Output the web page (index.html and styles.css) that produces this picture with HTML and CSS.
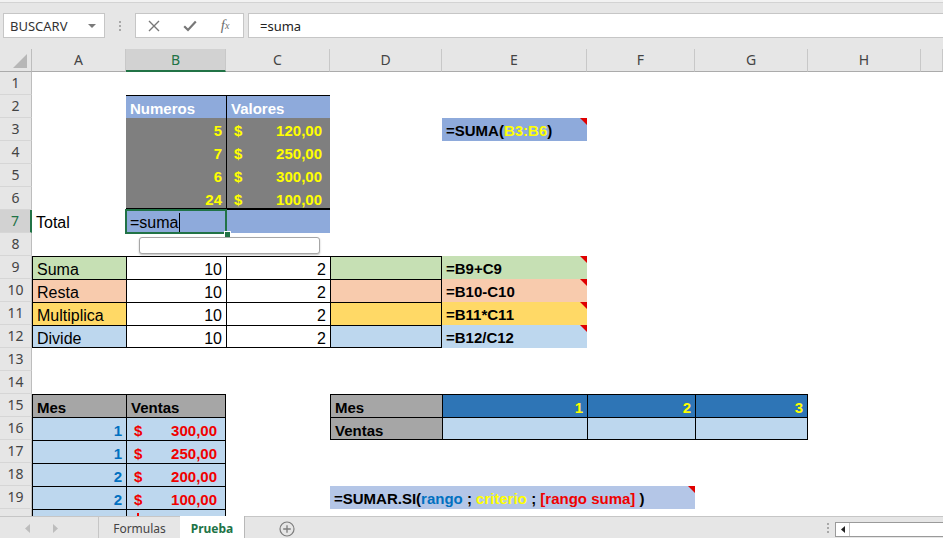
FILE: index.html
```html
<!DOCTYPE html>
<html lang="es">
<head>
<meta charset="utf-8">
<title>Prueba - Excel</title>
<link rel="stylesheet" href="styles.css">
</head>
<body>
<div class="app">
  <div class="fbar">
    <div class="namebox"><span>BUSCARV</span><svg class="caretdn" width="8" height="4" viewBox="0 0 8 4"><path d="M0 0H8L4 4Z" fill="#7a7a7a"/></svg></div>
    <div class="grip"><i></i><i></i><i></i></div>
    <div class="btns">
      <span class="btn"><svg width="12" height="12" viewBox="0 0 12 12"><path d="M1 1L11 11M11 1L1 11" stroke="#777" stroke-width="1.4" fill="none"/></svg></span>
      <span class="btn"><svg width="14" height="12" viewBox="0 0 14 12"><path d="M1.2 6.2L5 10L12.8 1.6" stroke="#777" stroke-width="2.2" fill="none"/></svg></span>
      <span class="btn fx">f<sub>x</sub></span>
    </div>
    <div class="finput">=suma</div>
  </div>

  <div class="sheet">
    <div class="grid">
      <div class="corner"><i></i></div>
      <div class="ch">A</div><div class="ch csel">B</div><div class="ch">C</div><div class="ch">D</div><div class="ch">E</div><div class="ch">F</div><div class="ch">G</div><div class="ch">H</div><div class="ch"></div>

      <div class="rh">1</div><div class="c"></div><div class="c"></div><div class="c"></div><div class="c"></div><div class="c"></div><div class="c"></div><div class="c"></div><div class="c"></div><div class="c"></div>

      <div class="rh">2</div><div class="c"></div><div class="c b f-blue wh t">Numeros</div><div class="c b f-blue wh t l">Valores</div><div class="c"></div><div class="c"></div><div class="c"></div><div class="c"></div><div class="c"></div><div class="c"></div>

      <div class="rh">3</div><div class="c"></div><div class="c b f-gray ye r">5</div><div class="c b f-gray ye l acc"><span>$</span><span>120,00</span></div><div class="c"></div><div class="c b f-blue tri">=SUMA(<span class="ye">B3:B6</span>)</div><div class="c"></div><div class="c"></div><div class="c"></div><div class="c"></div>

      <div class="rh">4</div><div class="c"></div><div class="c b f-gray ye r">7</div><div class="c b f-gray ye l acc"><span>$</span><span>250,00</span></div><div class="c"></div><div class="c"></div><div class="c"></div><div class="c"></div><div class="c"></div><div class="c"></div>

      <div class="rh">5</div><div class="c"></div><div class="c b f-gray ye r">6</div><div class="c b f-gray ye l acc"><span>$</span><span>300,00</span></div><div class="c"></div><div class="c"></div><div class="c"></div><div class="c"></div><div class="c"></div><div class="c"></div>

      <div class="rh">6</div><div class="c"></div><div class="c b f-gray ye r bm2">24</div><div class="c b f-gray ye l acc bm2"><span>$</span><span>100,00</span></div><div class="c"></div><div class="c"></div><div class="c"></div><div class="c"></div><div class="c"></div><div class="c"></div>

      <div class="rh rsel">7</div><div class="c">Total</div><div class="c f-blue">=suma<span class="cursor"></span></div><div class="c f-blue"></div><div class="c"></div><div class="c"></div><div class="c"></div><div class="c"></div><div class="c"></div><div class="c"></div>

      <div class="rh">8</div><div class="c"></div><div class="c"></div><div class="c"></div><div class="c"></div><div class="c"></div><div class="c"></div><div class="c"></div><div class="c"></div><div class="c"></div>

      <div class="rh">9</div><div class="c f-green t l">Suma</div><div class="c r t l">10</div><div class="c r t l">2</div><div class="c f-green t l rt"></div><div class="c b f-green tri">=B9+C9</div><div class="c"></div><div class="c"></div><div class="c"></div><div class="c"></div>

      <div class="rh">10</div><div class="c f-salmon t l">Resta</div><div class="c r t l">10</div><div class="c r t l">2</div><div class="c f-salmon t l rt"></div><div class="c b f-salmon tri">=B10-C10</div><div class="c"></div><div class="c"></div><div class="c"></div><div class="c"></div>

      <div class="rh">11</div><div class="c f-gold t l">Multiplica</div><div class="c r t l">10</div><div class="c r t l">2</div><div class="c f-gold t l rt"></div><div class="c b f-gold tri">=B11*C11</div><div class="c"></div><div class="c"></div><div class="c"></div><div class="c"></div>

      <div class="rh">12</div><div class="c f-lblue t l bm">Divide</div><div class="c r t l bm">10</div><div class="c r t l bm">2</div><div class="c f-lblue t l rt bm"></div><div class="c b f-lblue tri">=B12/C12</div><div class="c"></div><div class="c"></div><div class="c"></div><div class="c"></div>

      <div class="rh">13</div><div class="c"></div><div class="c"></div><div class="c"></div><div class="c"></div><div class="c"></div><div class="c"></div><div class="c"></div><div class="c"></div><div class="c"></div>

      <div class="rh">14</div><div class="c"></div><div class="c"></div><div class="c"></div><div class="c"></div><div class="c"></div><div class="c"></div><div class="c"></div><div class="c"></div><div class="c"></div>

      <div class="rh">15</div><div class="c b f-mid t l">Mes</div><div class="c b f-mid t l rt">Ventas</div><div class="c"></div><div class="c b f-mid t l">Mes</div><div class="c b f-dblue ye r t l">1</div><div class="c b f-dblue ye r t l">2</div><div class="c b f-dblue ye r t l rt">3</div><div class="c"></div><div class="c"></div>

      <div class="rh">16</div><div class="c b f-lblue bl r t l">1</div><div class="c b f-lblue rd acc t l rt"><span>$</span><span>300,00</span></div><div class="c"></div><div class="c b f-mid t l bm">Ventas</div><div class="c f-lblue t l bm"></div><div class="c f-lblue t l bm"></div><div class="c f-lblue t l rt bm"></div><div class="c"></div><div class="c"></div>

      <div class="rh">17</div><div class="c b f-lblue bl r t l">1</div><div class="c b f-lblue rd acc t l rt"><span>$</span><span>250,00</span></div><div class="c"></div><div class="c"></div><div class="c"></div><div class="c"></div><div class="c"></div><div class="c"></div><div class="c"></div>

      <div class="rh">18</div><div class="c b f-lblue bl r t l">2</div><div class="c b f-lblue rd acc t l rt"><span>$</span><span>200,00</span></div><div class="c"></div><div class="c"></div><div class="c"></div><div class="c"></div><div class="c"></div><div class="c"></div><div class="c"></div>

      <div class="rh">19</div><div class="c b f-lblue bl r t l">2</div><div class="c b f-lblue rd acc t l rt"><span>$</span><span>100,00</span></div><div class="c"></div><div class="c b f-peri tri span3">=SUMAR.SI(<span class="bl">rango</span> ; <span class="ye">criterio</span> ; <span class="rd">[rango suma]</span> )</div><div class="c"></div><div class="c"></div><div class="c"></div>

      <div class="rh"></div><div class="c f-lblue t l"></div><div class="c f-lblue t l rt"><span class="peek"></span></div><div class="c"></div><div class="c"></div><div class="c"></div><div class="c"></div><div class="c"></div><div class="c"></div><div class="c"></div>
    </div>

    <div class="sel"><span class="handle"></span></div>
    <div class="autocomplete"></div>
  </div>

  <div class="tabs">
    <div class="nav">
      <svg width="5" height="9" viewBox="0 0 5 9"><path d="M5 0V9L0 4.5Z" fill="#bdbdbd"/></svg>
      <svg width="5" height="9" viewBox="0 0 5 9"><path d="M0 0V9L5 4.5Z" fill="#bdbdbd"/></svg>
    </div>
    <div class="tab">Formulas</div>
    <div class="tab active">Prueba</div>
    <div class="addsheet"><svg width="16" height="16" viewBox="0 0 16 16"><circle cx="8" cy="8" r="7" fill="none" stroke="#7d7d7d" stroke-width="1.2"/><path d="M8 4.2V11.8M4.2 8H11.8" stroke="#7d7d7d" stroke-width="1.3"/></svg></div>
    <div class="spacer"></div>
    <div class="tgrip"><i></i><i></i><i></i></div>
    <div class="hscroll"><span class="sbtn"><svg width="4" height="7" viewBox="0 0 4 7"><path d="M4 0V7L0 3.5Z" fill="#222"/></svg></span></div>
  </div>
</div>
</body>
</html>
```

FILE: styles.css
```css
* { box-sizing: border-box; }
html, body { margin: 0; padding: 0; }
body {
  width: 943px;
  height: 538px;
  overflow: hidden;
  background: #fff;
  font-family: "Noto Sans", "Liberation Sans", sans-serif;
}
.app { display: flex; flex-direction: column; height: 538px; }

/* formula bar */
.fbar {
  height: 49px;
  flex: none;
  display: flex;
  align-items: flex-start;
  padding: 11px 0 0 3px;
  background: #e6e6e6;
  border-top: 2px solid #f2f2f2;
  box-shadow: inset 0 1px 0 #d3d3d3;
}
.namebox {
  width: 102px;
  height: 25px;
  background: #fff;
  border: 1px solid #c6c6c6;
  display: flex;
  align-items: center;
  justify-content: space-between;
  padding: 1px 8px 0 6px;
  font-size: 13px;
  color: #333;
}
.grip {
  width: 30px;
  height: 25px;
  display: flex;
  flex-direction: column;
  align-items: center;
  justify-content: center;
  gap: 2px;
}
.grip i, .tgrip i { display: block; width: 2px; height: 2px; background: #a8a8a8; }
.btns {
  width: 109px;
  height: 25px;
  background: #fff;
  border: 1px solid #c6c6c6;
  display: flex;
}
.btn {
  width: 36px;
  display: flex;
  align-items: center;
  justify-content: center;
}
.fx {
  font-family: "Liberation Serif", serif;
  font-style: italic;
  font-size: 15px;
  color: #6e6e6e;
  line-height: 1;
}
.fx sub { font-size: 10px; vertical-align: -1px; }
.finput {
  flex: 1;
  margin-left: 4px;
  margin-right: -2px;
  height: 25px;
  background: #fff;
  border: 1px solid #c6c6c6;
  padding: 1px 0 0 11px;
  font-size: 13px;
  line-height: 22px;
  color: #222;
}

/* sheet */
.sheet { flex: 1; position: relative; overflow: hidden; }
.grid {
  display: grid;
  grid-template-columns: 32px 94px 100px 104px 112px 145px 108px 113px 113px 22px;
  grid-auto-rows: 23px;
}
.corner {
  background: #e6e6e6;
  border-right: 1px solid #bdbdbd;
  border-bottom: 1px solid #ababab;
  position: relative;
}
.corner i {
  position: absolute;
  right: 4px;
  bottom: 3px;
  width: 0;
  height: 0;
  border-bottom: 14px solid #b7b7b7;
  border-left: 14px solid transparent;
}
.ch {
  background: #e6e6e6;
  border-right: 1px solid #c8c8c8;
  border-bottom: 1px solid #ababab;
  text-align: center;
  font-size: 14px;
  line-height: 22px;
  color: #444;
}
.csel {
  background: #d2d2d2;
  border-bottom: 2px solid #217346;
  color: #217346;
}
.rh {
  background: #e6e6e6;
  border-right: 1px solid #bdbdbd;
  border-bottom: 1px solid #d6d6d6;
  text-align: center;
  font-size: 14px;
  line-height: 22px;
  color: #444;
}
.rsel {
  background: #d2d2d2;
  border-right: 2px solid #217346;
  color: #217346;
}
.c {
  font-family: "Liberation Sans", Arial, sans-serif;
  font-size: 16px;
  line-height: 21px;
  padding: 2px 4px 0;
  white-space: nowrap;
  color: #000;
}
.b { font-weight: bold; font-size: 15px; }
.r { text-align: right; }
.acc { display: flex; justify-content: space-between; padding: 2px 8px 0 7px; }
.span3 { grid-column: span 3; }
.peek {
  display: block;
  width: 2px;
  height: 3px;
  margin: 1px 0 0 6px;
  background: #f00000;
}

/* borders */
.t { border-top: 1px solid #000; }
.l { border-left: 1px solid #000; }
.rt { border-right: 1px solid #000; }
.bm { border-bottom: 1px solid #000; }
.bm2 { border-bottom: 2px solid #000; }

/* fills */
.f-blue { background: #8eaadb; }
.f-gray { background: #7f7f7f; }
.f-green { background: #c6e0b4; }
.f-salmon { background: #f8cbad; }
.f-gold { background: #ffd966; }
.f-lblue { background: #bdd7ee; }
.f-mid { background: #a6a6a6; }
.f-dblue { background: #2e75b6; }
.f-peri { background: #b4c6e7; }

/* text colours */
.wh { color: #fff; }
.ye { color: #ffff00; }
.bl { color: #0070c0; }
.rd { color: #f00000; }

.tri { position: relative; }
.tri::after {
  content: "";
  position: absolute;
  top: 0;
  right: 0;
  width: 0;
  height: 0;
  border-top: 7px solid #e00000;
  border-left: 7px solid transparent;
}
.cursor {
  display: inline-block;
  width: 1px;
  height: 19px;
  background: #000;
  vertical-align: -4px;
  margin-left: 1px;
}

/* overlays */
.sel {
  position: absolute;
  left: 125px;
  top: 160px;
  width: 102px;
  height: 25px;
  border: 2px solid #217346;
}
.handle {
  position: absolute;
  left: 97px;
  top: 20px;
  width: 7px;
  height: 7px;
  background: #217346;
  border: 1px solid #fff;
}
.autocomplete {
  position: absolute;
  left: 139px;
  top: 188px;
  width: 181px;
  height: 17px;
  background: #fff;
  border: 1px solid #a6a6a6;
  border-radius: 3px;
  box-shadow: 0 1px 2px rgba(0, 0, 0, 0.25);
}

/* sheet tabs */
.tabs {
  height: 22px;
  flex: none;
  display: flex;
  background: #e6e6e6;
  border-top: 1px solid #c6c6c6;
  font-size: 12px;
}
.nav {
  width: 98px;
  display: flex;
  align-items: center;
  padding: 2px 0 0 25px;
  gap: 23px;
}
.tab {
  width: 82px;
  border-left: 1px solid #c6c6c6;
  text-align: center;
  padding-top: 2px;
  line-height: 19px;
  color: #444;
}
.tab.active {
  width: 65px;
  margin-top: -1px;
  padding-top: 3px;
  background: #fff;
  border-left: none;
  border-right: 1px solid #b8b8b8;
  color: #217346;
  font-weight: bold;
}
.addsheet {
  margin-left: 34px;
  padding-top: 3px;
  display: flex;
  align-items: center;
}
.spacer { flex: 1; }
.tgrip {
  width: 14px;
  display: flex;
  flex-direction: column;
  align-items: center;
  justify-content: center;
  gap: 2px;
}
.hscroll {
  width: 110px;
  margin: 5px -2px 0 0;
  height: 15px;
  background: #fff;
  border: 1px solid #9a9a9a;
  display: flex;
}
.sbtn {
  width: 14px;
  border-right: 1px solid #c6c6c6;
  display: flex;
  align-items: center;
  justify-content: center;
}
```
